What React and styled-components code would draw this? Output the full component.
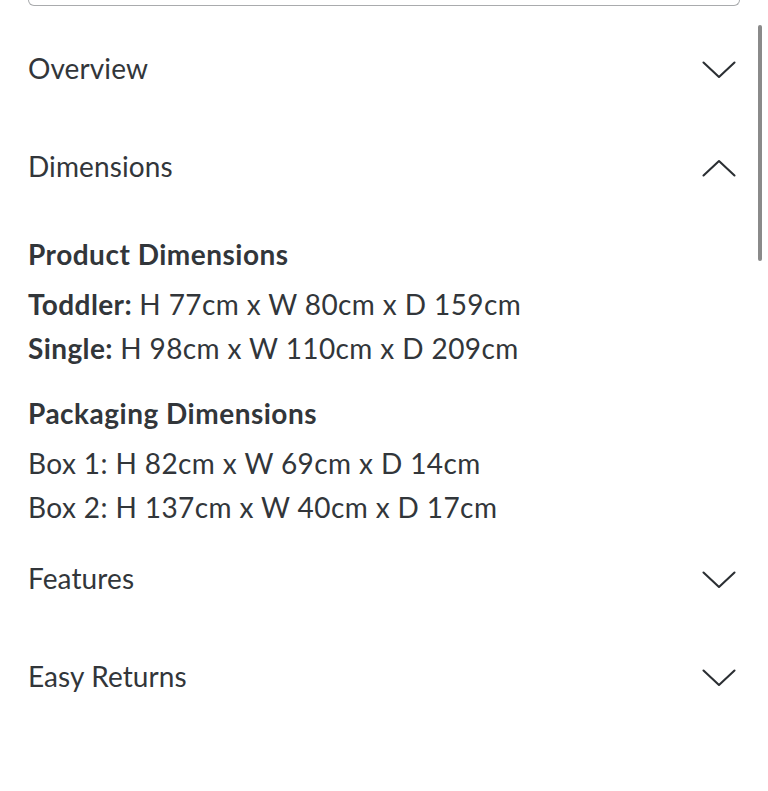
import React, { useState } from 'react';
import styled, { createGlobalStyle } from 'styled-components';

const GlobalStyle = createGlobalStyle`
  html, body {
    margin: 0;
    padding: 0;
    background: #ffffff;
  }
  body {
    font-family: "Lato", "Noto Sans", sans-serif;
    color: #32363a;
    overflow: hidden;
  }
`;

const Page = styled.div`
  position: relative;
  width: 768px;
  height: 791px;
  padding: 0 28px;
  box-sizing: border-box;
`;

const BoxEdge = styled.div`
  height: 5px;
  border: 1.5px solid #a9abad;
  border-top: none;
  border-radius: 0 0 7px 7px;
`;

const Scrollbar = styled.div`
  position: absolute;
  top: 25px;
  right: 6px;
  width: 4px;
  height: 236px;
  border-radius: 2px;
  background: #8a8a8a;
`;

const List = styled.div`
  display: flex;
  flex-direction: column;
  padding: 15px 4px 0 0;
`;

const Header = styled.button`
  display: flex;
  align-items: center;
  justify-content: space-between;
  width: 100%;
  height: 98px;
  padding: 0;
  border: none;
  background: none;
  cursor: pointer;
  font-family: inherit;
  font-size: 28px;
  letter-spacing: 0.1px;
  color: #32363a;
  text-align: left;
`;

const HeaderLabel = styled.span`
  padding-bottom: 4px;
`;

const Chevron = styled.svg`
  width: 34px;
  height: 18px;
  transform: ${(p) => (p.$open ? 'rotate(180deg)' : 'none')};
`;

const Body = styled.div`
  padding: 19px 0 2px;
`;

const Group = styled.div`
  margin-bottom: 25px;
  &:last-child {
    margin-bottom: 0;
  }
`;

const GroupTitle = styled.div`
  font-size: 28px;
  font-weight: 700;
  letter-spacing: 0.5px;
  line-height: 36px;
  margin-bottom: 10px;
`;

const Line = styled.div`
  font-size: 28px;
  letter-spacing: 0.4px;
  line-height: 44px;
  b {
    font-weight: 700;
  }
`;

const ChevronIcon = ({ open }) => (
  <Chevron $open={open} viewBox="0 0 34 18" fill="none">
    <path d="M1.5 1.5 L17 16 L32.5 1.5" stroke="#2b2f33" strokeWidth="2.1" strokeLinecap="round" strokeLinejoin="round" />
  </Chevron>
);

const sections = [
  { title: 'Overview' },
  {
    title: 'Dimensions',
    groups: [
      {
        title: 'Product Dimensions',
        lines: [
          ['Toddler:', 'H 77cm x W 80cm x D 159cm'],
          ['Single:', 'H 98cm x W 110cm x D 209cm'],
        ],
      },
      {
        title: 'Packaging Dimensions',
        lines: [
          [null, 'Box 1: H 82cm x W 69cm x D 14cm'],
          [null, 'Box 2: H 137cm x W 40cm x D 17cm'],
        ],
      },
    ],
  },
  { title: 'Features' },
  { title: 'Easy Returns' },
];

export default function App() {
  const [open, setOpen] = useState('Dimensions');

  return (
    <Page>
      <GlobalStyle />
      <BoxEdge />
      <Scrollbar />
      <List>
        {sections.map((s) => {
          const isOpen = open === s.title;
          return (
            <div key={s.title}>
              <Header onClick={() => setOpen(isOpen ? null : s.title)}>
                <HeaderLabel>{s.title}</HeaderLabel>
                <ChevronIcon open={isOpen} />
              </Header>
              {isOpen && s.groups && (
                <Body>
                  {s.groups.map((g) => (
                    <Group key={g.title}>
                      <GroupTitle>{g.title}</GroupTitle>
                      {g.lines.map(([label, text]) => (
                        <Line key={text}>
                          {label && <b>{label} </b>}
                          {text}
                        </Line>
                      ))}
                    </Group>
                  ))}
                </Body>
              )}
            </div>
          );
        })}
      </List>
    </Page>
  );
}
